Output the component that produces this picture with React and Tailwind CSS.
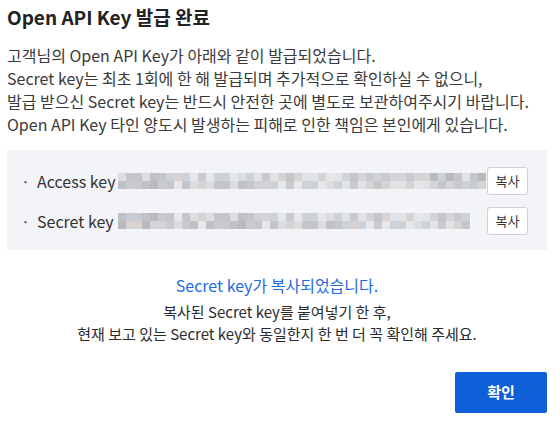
const SHADES = [
  "bg-[#d3d4d8]",
  "bg-[#dcdde0]",
  "bg-[#c9cacf]",
  "bg-[#e2e3e6]",
  "bg-[#bfc1c6]",
  "bg-[#d8d3d0]",
  "bg-[#cdd2d8]",
  "bg-[#b9babf]",
  "bg-[#e6e7ea]",
  "bg-[#c4c6cb]",
];

function Masked({ cols, seed }) {
  const cells = [];
  for (let r = 0; r < 2; r++) {
    for (let c = 0; c < cols; c++) {
      const n = (c * 7 + r * 13 + seed * 31 + ((c * c) % 11)) % SHADES.length;
      cells.push(<div key={r + "-" + c} className={"h-[8px] w-[8px] " + SHADES[n]} />);
    }
  }
  return (
    <div className="flex flex-wrap" style={{ width: cols * 8 }}>
      {cells}
    </div>
  );
}

function KeyRow({ label, cols, seed }) {
  return (
    <div className="flex items-center h-[28px]">
      <span className="ml-[-4px] w-[16px] text-[#555]">·</span>
      <span className="w-[81px] text-[#333]">{label}</span>
      <div className="flex-1">
        <Masked cols={cols} seed={seed} />
      </div>
      <button className="w-[41px] h-[28px] rounded-[3px] border border-[#cfd1d5] bg-white text-[13px] text-[#333]">
        복사
      </button>
    </div>
  );
}

export default function App() {
  return (
    <div
      className="w-[560px] h-[424px] bg-white pl-[7px] pr-[13px] pt-[3px]"
      style={{ fontFamily: '"Noto Sans CJK KR", "Noto Sans", sans-serif' }}
    >
      <h1 className="text-[19px] font-bold leading-[28px] text-[#222]">Open API Key 발급 완료</h1>
      <div className="mt-[13px] text-[16px] leading-[23px] text-[#3a3a3a]">
        <p>고객님의 Open API Key가 아래와 같이 발급되었습니다.</p>
        <p>Secret key는 최초 1회에 한 해 발급되며 추가적으로 확인하실 수 없으니,</p>
        <p>발급 받으신 Secret key는 반드시 안전한 곳에 별도로 보관하여주시기 바랍니다.</p>
        <p>Open API Key 타인 양도시 발생하는 피해로 인한 책임은 본인에게 있습니다.</p>
      </div>
      <div className="mt-[14px] h-[100px] bg-[#f3f4f8] pl-[18px] pr-[19px] pt-[17px] flex flex-col gap-[12px] text-[16px]">
        <KeyRow label="Access key" cols={46} seed={1} />
        <KeyRow label="Secret key" cols={44} seed={4} />
      </div>
      <div className="mt-[24px] text-center leading-[22px]">
        <p className="text-[16px] text-[#1f6be3]">Secret key가 복사되었습니다.</p>
        <div className="mt-[5px] text-[15px] text-[#2b2b2b]">
          <p>복사된 Secret key를 붙여넣기 한 후,</p>
          <p>현재 보고 있는 Secret key와 동일한지 한 번 더 꼭 확인해 주세요.</p>
        </div>
      </div>
      <div className="mt-[27px] flex justify-end">
        <button className="w-[92px] h-[41px] rounded-[2px] bg-[#0e5fd8] text-[15px] font-bold text-white">
          확인
        </button>
      </div>
    </div>
  );
}
